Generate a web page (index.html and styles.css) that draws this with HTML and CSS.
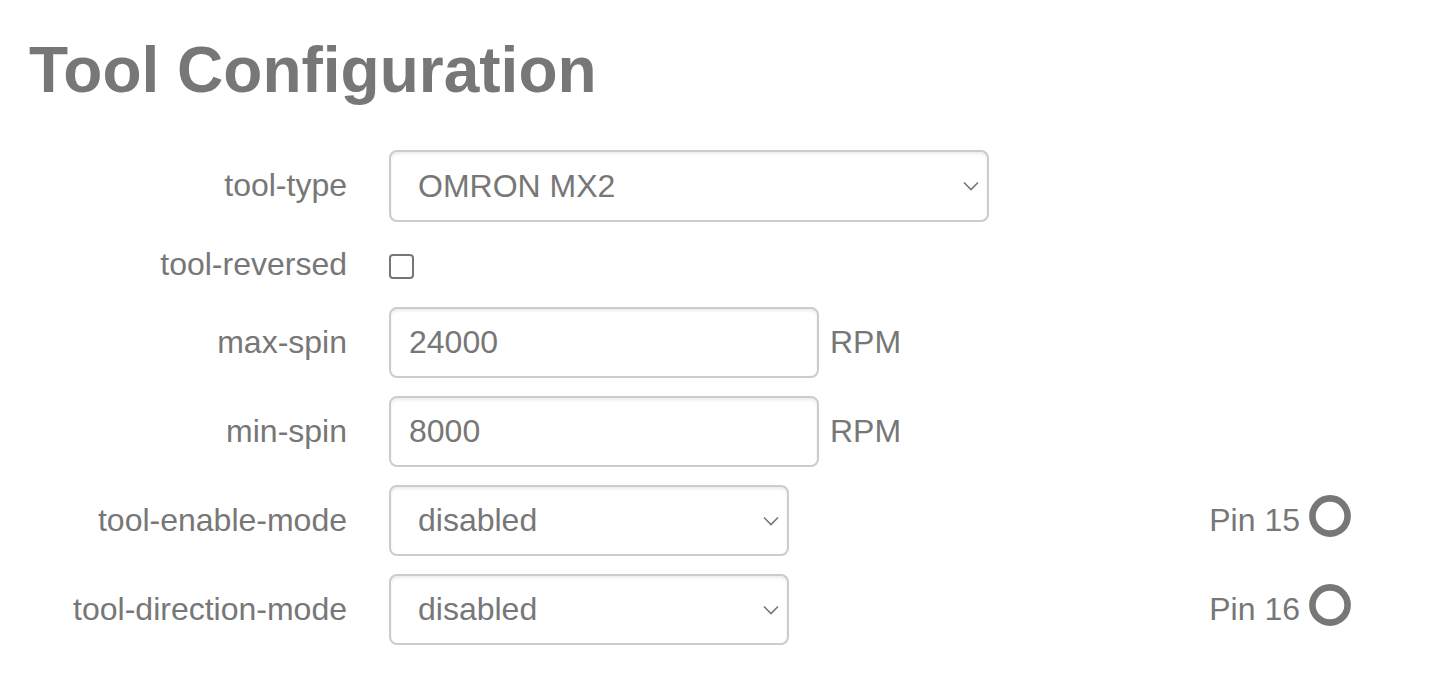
FILE: index.html
```html
<!DOCTYPE html>
<html lang="en">
<head>
<meta charset="utf-8">
<title>Tool Configuration</title>
<link rel="stylesheet" href="styles.css">
</head>
<body>
<h1 class="title">Tool Configuration</h1>
<form class="config">
  <div class="row">
    <label class="label" for="tool-type">tool-type</label>
    <div class="select-wrap wide">
      <select id="tool-type" class="control select"><option>OMRON MX2</option></select>
      <svg class="chevron" width="16" height="10" viewBox="0 0 16 10"><polyline points="1,1.5 8,8.5 15,1.5" fill="none" stroke="#777" stroke-width="1.6"/></svg>
    </div>
  </div>
  <div class="row check-row">
    <label class="label" for="tool-reversed">tool-reversed</label>
    <input id="tool-reversed" type="checkbox" class="checkbox">
  </div>
  <div class="row">
    <label class="label" for="max-spin">max-spin</label>
    <input id="max-spin" class="control input" type="text" value="24000">
    <span class="unit">RPM</span>
  </div>
  <div class="row">
    <label class="label" for="min-spin">min-spin</label>
    <input id="min-spin" class="control input" type="text" value="8000">
    <span class="unit">RPM</span>
  </div>
  <div class="row">
    <label class="label" for="tool-enable-mode">tool-enable-mode</label>
    <div class="select-wrap narrow">
      <select id="tool-enable-mode" class="control select"><option>disabled</option></select>
      <svg class="chevron" width="16" height="10" viewBox="0 0 16 10"><polyline points="1,1.5 8,8.5 15,1.5" fill="none" stroke="#777" stroke-width="1.6"/></svg>
    </div>
    <div class="pin"><span>Pin 15</span><svg class="ring" width="42" height="42" viewBox="0 0 42 42"><circle cx="21" cy="21" r="17.6" fill="none" stroke="#777" stroke-width="6.6"/></svg></div>
  </div>
  <div class="row">
    <label class="label" for="tool-direction-mode">tool-direction-mode</label>
    <div class="select-wrap narrow">
      <select id="tool-direction-mode" class="control select"><option>disabled</option></select>
      <svg class="chevron" width="16" height="10" viewBox="0 0 16 10"><polyline points="1,1.5 8,8.5 15,1.5" fill="none" stroke="#777" stroke-width="1.6"/></svg>
    </div>
    <div class="pin"><span>Pin 16</span><svg class="ring" width="42" height="42" viewBox="0 0 42 42"><circle cx="21" cy="21" r="17.6" fill="none" stroke="#777" stroke-width="6.6"/></svg></div>
  </div>
</form>
</body>
</html>
```
FILE: styles.css
```css
html, body {
  margin: 0;
  padding: 0;
  background: #fff;
}
body {
  font-family: "Liberation Sans", Arial, sans-serif;
  color: #777;
  font-size: 32px;
}
.title {
  margin: 0;
  padding: 34px 0 0 29px;
  font-size: 64px;
  line-height: 72px;
  font-weight: bold;
  color: #777;
}
.config {
  margin-top: 44px;
  display: flex;
  flex-direction: column;
  gap: 17.5px;
  padding-right: 102px;
}
.row {
  display: flex;
  align-items: center;
  height: 71.5px;
}
.check-row {
  height: 50px;
}
.label {
  width: 347px;
  margin-right: 42px;
  text-align: right;
  flex: none;
  color: #777;
}
.control {
  box-sizing: border-box;
  height: 71.5px;
  border: 2px solid #ccc;
  border-radius: 8px;
  box-shadow: inset 0 2px 3px rgba(0, 0, 0, 0.08);
  background: #fff;
  font-family: "Liberation Sans", Arial, sans-serif;
  font-size: 32px;
  color: #777;
  outline: none;
  margin: 0;
}
.input {
  width: 430px;
  padding: 0 18px;
}
.select-wrap {
  position: relative;
  display: flex;
}
.select-wrap.wide { width: 600px; }
.select-wrap.narrow { width: 400px; }
.select {
  width: 100%;
  -webkit-appearance: none;
  appearance: none;
  padding: 0 40px 0 27px;
}
.chevron {
  position: absolute;
  right: 10px;
  top: 31px;
  pointer-events: none;
}
.checkbox {
  -webkit-appearance: none;
  appearance: none;
  box-sizing: border-box;
  width: 25px;
  height: 25px;
  margin: 4px 0 0 0;
  border: 2px solid #767676;
  border-radius: 4px;
  background: #fff;
}
.unit {
  margin-left: 11px;
}
.pin {
  margin-left: auto;
  display: flex;
  align-items: center;
  gap: 9px;
}
.ring {
  display: block;
  margin-bottom: 8px;
}
```
